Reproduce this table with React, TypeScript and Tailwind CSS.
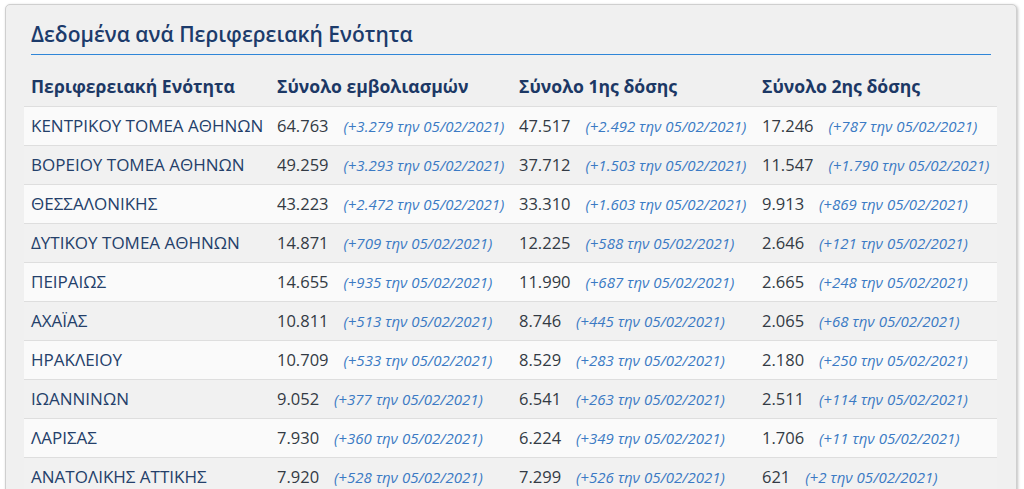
const rows = [
  ["ΚΕΝΤΡΙΚΟΥ ΤΟΜΕΑ ΑΘΗΝΩΝ", "64.763", "+3.279", "47.517", "+2.492", "17.246", "+787"],
  ["ΒΟΡΕΙΟΥ ΤΟΜΕΑ ΑΘΗΝΩΝ", "49.259", "+3.293", "37.712", "+1.503", "11.547", "+1.790"],
  ["ΘΕΣΣΑΛΟΝΙΚΗΣ", "43.223", "+2.472", "33.310", "+1.603", "9.913", "+869"],
  ["ΔΥΤΙΚΟΥ ΤΟΜΕΑ ΑΘΗΝΩΝ", "14.871", "+709", "12.225", "+588", "2.646", "+121"],
  ["ΠΕΙΡΑΙΩΣ", "14.655", "+935", "11.990", "+687", "2.665", "+248"],
  ["ΑΧΑΪΑΣ", "10.811", "+513", "8.746", "+445", "2.065", "+68"],
  ["ΗΡΑΚΛΕΙΟΥ", "10.709", "+533", "8.529", "+283", "2.180", "+250"],
  ["ΙΩΑΝΝΙΝΩΝ", "9.052", "+377", "6.541", "+263", "2.511", "+114"],
  ["ΛΑΡΙΣΑΣ", "7.930", "+360", "6.224", "+349", "1.706", "+11"],
  ["ΑΝΑΤΟΛΙΚΗΣ ΑΤΤΙΚΗΣ", "7.920", "+528", "7.299", "+526", "621", "+2"],
]

const date = "05/02/2021"
const cols = "grid grid-cols-[246px_242px_243px_242px]"

function Value({ total, diff }: { total: string; diff: string }) {
  return (
    <div className="flex items-center px-[7px] whitespace-nowrap">
      <span className="text-[16.5px] text-[#333a44]">{total}</span>
      <span className="ml-[15px] text-[15px] italic text-[#3b7ac4]">
        ({diff} την {date})
      </span>
    </div>
  )
}

export default function App() {
  return (
    <div className="min-h-screen bg-white pt-[4px] pl-[5px] pr-[7px] font-['Open_Sans',sans-serif]">
      <div className="rounded-[5px] border border-[#cfcfcf] bg-[#f0f0f0] pt-[15px] pb-4 pl-[18px] pr-[18px] shadow-[1px_1px_3px_rgba(0,0,0,0.25)]">
        {/* Title */}
        <div className="mx-[7px] border-b border-[#2f86d8] pb-[6px]">
          <h2 className="text-[21px] leading-[28px] font-semibold text-[#1c3b6b]">
            Δεδομένα ανά Περιφερειακή Ενότητα
          </h2>
        </div>

        {/* Table */}
        <div className="mt-[12px] w-[973px]">
          <div className={`${cols} h-[39px] items-center text-[17.6px] font-bold text-[#1c3865]`}>
            <div className="px-[7px]">Περιφερειακή Ενότητα</div>
            <div className="px-[7px]">Σύνολο εμβολιασμών</div>
            <div className="px-[7px]">Σύνολο 1ης δόσης</div>
            <div className="px-[7px]">Σύνολο 2ης δόσης</div>
          </div>
          {rows.map((r, i) => (
            <div
              key={r[0]}
              className={`${cols} h-[39px] items-center border-t border-[#dedede] ${
                i % 2 === 0 ? "bg-[#fafafa]" : "bg-[#f1f1f1]"
              }`}
            >
              <div className="px-[7px] text-[17px] text-[#24406a] whitespace-nowrap">{r[0]}</div>
              <Value total={r[1]} diff={r[2]} />
              <Value total={r[3]} diff={r[4]} />
              <Value total={r[5]} diff={r[6]} />
            </div>
          ))}
        </div>
      </div>
    </div>
  )
}
